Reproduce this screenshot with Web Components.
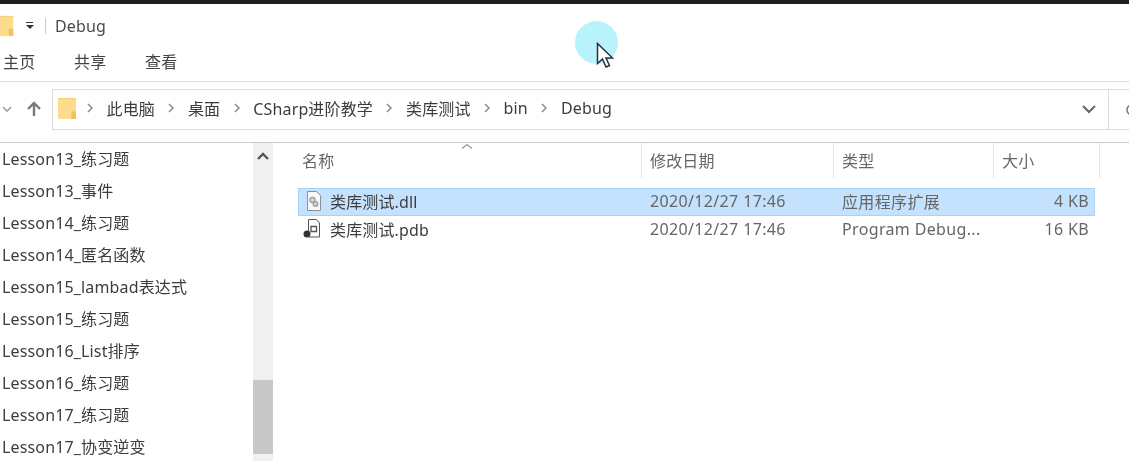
<!DOCTYPE html>
<html lang="zh">
<head>
<meta charset="utf-8">
<title>Debug</title>
<style>
  html, body { margin: 0; height: 461px; overflow: hidden; background: #fff; }
  body { font: 16px "Noto Sans", "Noto Sans CJK SC", sans-serif; color: #3c3c3c; letter-spacing: .15px; }
</style>
</head>
<body>
<explorer-window>
  <title-bar>Debug</title-bar>
  <ribbon-tabs></ribbon-tabs>
  <address-bar></address-bar>
  <div style="display:flex;height:318px">
    <nav-pane></nav-pane>
    <file-list>
      <file-row name="类库测试.dll" date="2020/12/27 17:46" type="应用程序扩展" size="4 KB" icon="dll" selected></file-row>
      <file-row name="类库测试.pdb" date="2020/12/27 17:46" type="Program Debug..." size="16 KB" icon="pdb"></file-row>
    </file-list>
  </div>
  <cursor-mark></cursor-mark>
</explorer-window>

<script>
const folderIcon = (w, h) => `<svg width="${w}" height="${h}" viewBox="0 0 20 24">
  <path d="M0 1h19v22H0z" fill="#fcdc8c"/><path d="M14 15h5v8h-5z" fill="#f2c25e"/><path d="M0 1h19v1H0z" fill="#f6cf78"/></svg>`;

class ExplorerWindow extends HTMLElement {
  constructor() {
    super();
    // the reference is a soft video frame, hence the slight blur
    this.attachShadow({ mode: 'open' }).innerHTML = `<style>
      :host { display: block; position: relative; height: 461px; overflow: hidden; border-top: 4px solid #1e1e1e; box-sizing: border-box; filter: blur(.45px); }
    </style><slot></slot>`;
  }
}

class TitleBar extends HTMLElement {
  constructor() {
    super();
    this.attachShadow({ mode: 'open' }).innerHTML = `<style>
      :host { display: flex; align-items: center; height: 44px; color: #4a4a4a; }
      .folder { margin-left: -5px; display: flex; }
      .qa { margin-left: 10px; width: 9px; height: 10px; display: flex; flex-direction: column; align-items: center; gap: 2px; padding-top: 1px; }
      .qa i { display: block; width: 7px; height: 1px; background: #333; }
      .qa b { display: block; border: 4px solid transparent; border-top: 4px solid #333; border-bottom: 0; }
      .sep { width: 1px; height: 16px; background: #c8c8c8; margin: 0 9px 0 11px; }
    </style>
    <span class="folder">${folderIcon(20, 22)}</span>
    <span class="qa"><i></i><b></b></span>
    <span class="sep"></span>
    <slot></slot>`;
  }
}

class RibbonTabs extends HTMLElement {
  constructor() {
    super();
    this.attachShadow({ mode: 'open' }).innerHTML = `<style>
      :host { display: flex; align-items: center; gap: 38.700px; height: 25px; padding: 0 0 8px 3px; border-bottom: 1px solid #dcdcdc; color: #444; }
    </style>
    <span>主页</span><span>共享</span><span>查看</span>`;
  }
}

class AddressBar extends HTMLElement {
  constructor() {
    super();
    const crumbs = ['此电脑', '桌面', 'CSharp进阶教学', '类库测试', 'bin', 'Debug'];
    this.attachShadow({ mode: 'open' }).innerHTML = `<style>
      :host { display: flex; align-items: flex-start; height: 61px; box-sizing: border-box; padding-top: 7px; border-bottom: 1px solid #c9c9c9; }
      .nav { width: 52px; height: 39px; display: flex; align-items: center; flex: none; }
      .box { flex: 1; height: 41px; box-sizing: border-box; border: 1px solid #dcdcdc; border-right: 0; display: flex; align-items: center; padding-left: 5px; }
      .folder { display: flex; margin: 0 10px 2px 0; }
      .crumbs { display: flex; align-items: center; flex: 1; color: #3c3c3c; padding-bottom: 4px; }
      .crumbs svg { margin: 0 13.500px; }
      .crumbs svg:first-child { margin-left: 0; }
      .drop { width: 38px; display: flex; justify-content: center; border-right: 1px solid #dcdcdc; align-self: stretch; align-items: center; }
      .refresh { width: 20px; flex: none; height: 41px; box-sizing: border-box; border-top: 1px solid #dcdcdc; border-bottom: 1px solid #dcdcdc; display: flex; align-items: center; padding-left: 15px; overflow: hidden; }
      .refresh svg { flex: none; }
    </style>
    <span class="nav">
      <svg width="10" height="8" viewBox="0 0 10 8" style="margin-left:2px"><path d="M1 2l4 4 4-4" fill="none" stroke="#a0a0a0" stroke-width="1.600"/></svg>
      <svg width="18" height="18" viewBox="0 0 18 18" style="margin-left:13px"><path d="M9 16V3M3 9l6-6 6 6" fill="none" stroke="#7a7a7a" stroke-width="2.400"/></svg>
    </span>
    <div class="box">
      <span class="folder">${folderIcon(19, 23)}</span>
      <div class="crumbs">
        ${crumbs.map(c => `<svg width="6" height="10" viewBox="0 0 6 10"><path d="M1 1l4 4-4 4" fill="none" stroke="#8a8a8a" stroke-width="1.500"/></svg><span>${c}</span>`).join('')}
      </div>
      <span class="drop"><svg width="14" height="9" viewBox="0 0 14 9"><path d="M1 1l6 6 6-6" fill="none" stroke="#666" stroke-width="2"/></svg></span>
    </div>
    <span class="refresh"><svg width="16" height="16" viewBox="0 0 16 16"><path d="M13 8a5 5 0 1 1-2-4M11 1v3.500H7.500" fill="none" stroke="#777" stroke-width="1.500"/></svg></span>`;
  }
}

class NavPane extends HTMLElement {
  constructor() {
    super();
    const items = ['Lesson13_练习题', 'Lesson13_事件', 'Lesson14_练习题', 'Lesson14_匿名函数', 'Lesson15_lambad表达式',
      'Lesson15_练习题', 'Lesson16_List排序', 'Lesson16_练习题', 'Lesson17_练习题', 'Lesson17_协变逆变'];
    this.attachShadow({ mode: 'open' }).innerHTML = `<style>
      :host { display: flex; width: 273px; flex: none; height: 100%; }
      ul { list-style: none; margin: 0; padding: 0 0 0 2px; flex: 1; overflow: hidden; }
      li { height: 32px; line-height: 32px; white-space: nowrap; color: #3c3c3c; }
      .bar { width: 20px; background: #f0f0f0; display: flex; flex-direction: column; align-items: center; }
      .up { margin: 9px 0 0; display: flex; }
      .gap { height: 219px; flex: none; }
      .thumb { width: 100%; height: 74px; background: #c8c8c8; }
    </style>
    <ul>${items.map(i => `<li>${i}</li>`).join('')}</ul>
    <div class="bar">
      <span class="up"><svg width="12" height="9" viewBox="0 0 12 9"><path d="M1 7l5-5 5 5" fill="none" stroke="#555" stroke-width="2.400"/></svg></span>
      <span class="gap"></span>
      <span class="thumb"></span>
    </div>`;
  }
}

class FileList extends HTMLElement {
  constructor() {
    super();
    this.attachShadow({ mode: 'open' }).innerHTML = `<style>
      :host { display: block; flex: 1; position: relative; padding-left: 25px; }
      .head { display: grid; grid-template-columns: 343px 192px 160px 107px; height: 35px; color: #666; }
      .head span { display: flex; align-items: center; padding: 0 0 2px 8px; border-left: 1px solid #e6e6e6; }
      .head span:first-child { border-left: 0; padding-left: 4px; }
      .head span:last-child { border-right: 1px solid #e6e6e6; }
      .sort { position: absolute; left: 188px; top: 0; }
      .rows { margin-top: 10px; width: 797px; }
    </style>
    <div class="head"><span>名称</span><span>修改日期</span><span>类型</span><span>大小</span></div>
    <svg class="sort" width="12" height="7" viewBox="0 0 12 7"><path d="M1 5.500l5-4 5 4" fill="none" stroke="#999" stroke-width="1.300"/></svg>
    <div class="rows"><slot></slot></div>`;
  }
}

class FileRow extends HTMLElement {
  constructor() {
    super();
    const dll = `<svg width="18" height="20" viewBox="0 0 18 20"><path d="M2.500.5h9l4 4v15h-13z" fill="#f8f8f8" stroke="#909090"/><circle cx="7.500" cy="9" r="2.500" fill="#ddd" stroke="#a0a0a0" stroke-width="1.500"/><circle cx="10.500" cy="13" r="2.200" fill="#ddd" stroke="#a0a0a0" stroke-width="1.500"/></svg>`;
    const pdb = `<svg width="18" height="20" viewBox="0 0 18 20" style="margin-left:-2px;margin-right:2px"><path d="M5.500.5h8l3 3.500v14h-11z" fill="#fff" stroke="#555"/><path d="M8 7.500h5.500v5H8z" fill="none" stroke="#555" stroke-width="1.300"/><circle cx="4" cy="15" r="3.500" fill="#333"/></svg>`;
    this.attachShadow({ mode: 'open' }).innerHTML = `<style>
      :host { display: grid; grid-template-columns: 343px 192px 160px 102px; align-items: center; height: 28px; box-sizing: border-box; padding-bottom: 2px; color: #666; letter-spacing: .35px; }
      :host([selected]) { background: #c4e2fd; box-shadow: inset 0 0 0 1px #a9d3f5; }
      .name { display: flex; align-items: center; gap: 7px; padding-left: 7px; color: #3c3c3c; letter-spacing: .15px; }
      .name svg { flex: none; }
      .date { padding-left: 9px; }
      .type { padding-left: 9px; white-space: nowrap; }
      .size { text-align: right; padding-right: 6px; }
    </style>
    <span class="name">${this.getAttribute('icon') === 'dll' ? dll : pdb}<span>${this.getAttribute('name')}</span></span>
    <span class="date">${this.getAttribute('date')}</span>
    <span class="type">${this.getAttribute('type')}</span>
    <span class="size">${this.getAttribute('size')}</span>`;
  }
}

// recorded pointer: highlight circle plus arrow, floats over the window
class CursorMark extends HTMLElement {
  constructor() {
    super();
    this.attachShadow({ mode: 'open' }).innerHTML = `<style>
      :host { position: absolute; left: 575px; top: 17px; width: 44px; height: 50px; pointer-events: none; }
      .dot { position: absolute; left: 0; top: 0; width: 43px; height: 43px; border-radius: 50%; background: #b8f3fb; }
      svg { position: absolute; left: 21px; top: 21px; }
    </style>
    <span class="dot"></span>
    <svg width="18" height="27" viewBox="0 0 18 27"><path d="M1.500 1.500v20l5-4.500 3.500 8 3.500-1.500-3.500-7.500h6.500z" fill="#fff" stroke="#26323a" stroke-width="1.500"/></svg>`;
  }
}

customElements.define('explorer-window', ExplorerWindow);
customElements.define('title-bar', TitleBar);
customElements.define('ribbon-tabs', RibbonTabs);
customElements.define('address-bar', AddressBar);
customElements.define('nav-pane', NavPane);
customElements.define('file-list', FileList);
customElements.define('file-row', FileRow);
customElements.define('cursor-mark', CursorMark);
</script>
</body>
</html>
